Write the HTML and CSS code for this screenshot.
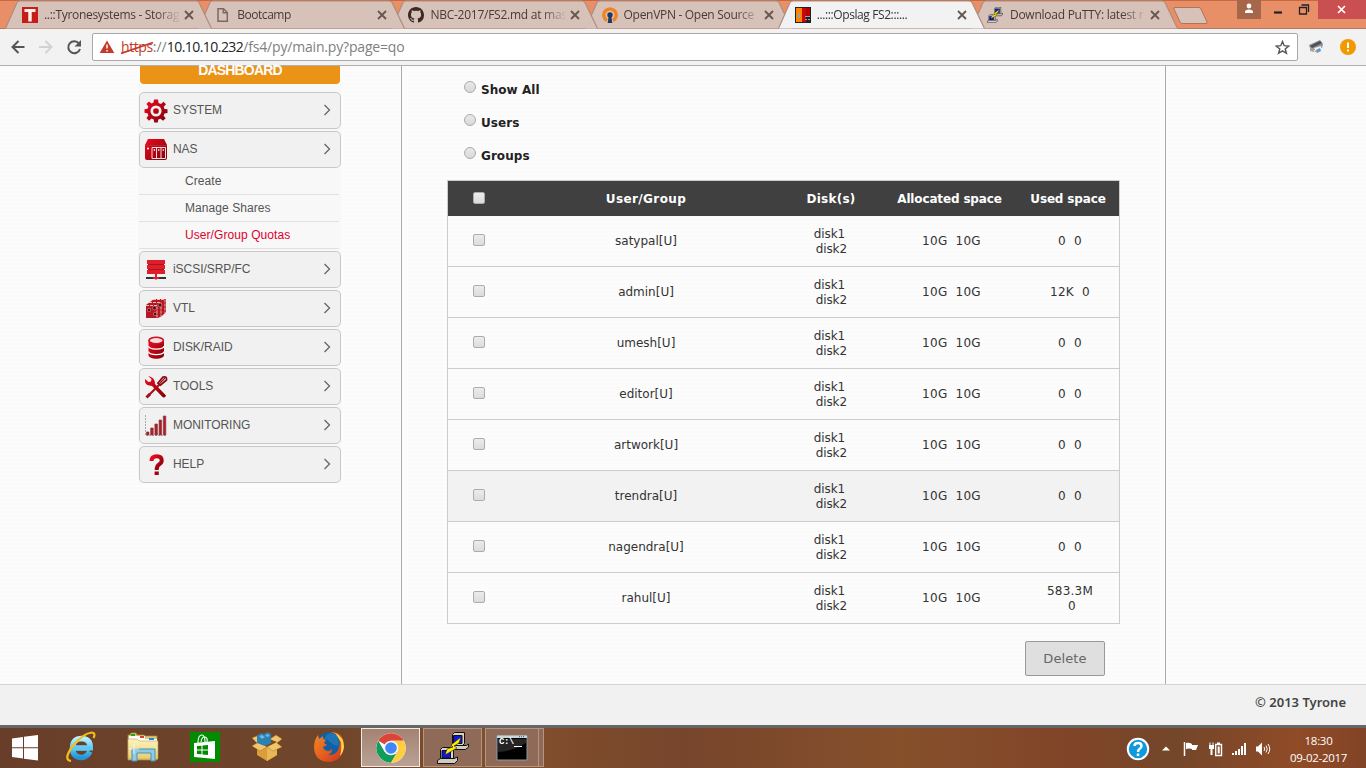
FILE: index.html
```html
<!DOCTYPE html>
<html lang="en">
<head>
<meta charset="utf-8">
<title>...:::Opslag FS2:::...</title>
<link rel="stylesheet" href="styles.css">
</head>
<body>
<svg class="defs" width="0" height="0" aria-hidden="true">
  <defs>
    <linearGradient id="red" x1="0" y1="0" x2="1" y2="1"><stop offset="0" stop-color="#ee0a20"/><stop offset="1" stop-color="#800008"/></linearGradient>
    <linearGradient id="paper" x1="0" y1="0" x2="0" y2="1"><stop offset="0" stop-color="#fff4bd"/><stop offset="1" stop-color="#e8cd71"/></linearGradient>
    <linearGradient id="ie" x1="0" y1="0" x2="0" y2="1"><stop offset="0" stop-color="#b5efff"/><stop offset=".5" stop-color="#5ccaf5"/><stop offset="1" stop-color="#2495d8"/></linearGradient>
    <linearGradient id="fox" x1="0" y1="0" x2="1" y2="1"><stop offset="0" stop-color="#ef8b28"/><stop offset=".5" stop-color="#e8601f"/><stop offset="1" stop-color="#c63220"/></linearGradient>
    <symbol id="tabshape" viewBox="0 0 208 29"><path d="M0.500 28.500L12 2.500Q13 1 15 1H191Q193 1 194 2.500L206.500 28.500"/></symbol>
    <symbol id="x" viewBox="0 0 10 10"><path d="M1 1L9 9M9 1L1 9" stroke="#66564f" stroke-width="1.800"/></symbol>
    <symbol id="chev" viewBox="0 0 8 12"><path d="M1.500 1L6.500 6L1.500 11" fill="none" stroke="#666" stroke-width="1.300"/></symbol>
    <symbol id="putty" viewBox="0 0 32 32">
      <g stroke="#111" stroke-width="1"><path d="M15.500 2.500L17.500.500H27.500V11.500L25.500 13.500H15.500Z" fill="#d9d5c5"/><path d="M16.500 3.500H25V11.500H16.500Z" fill="#1018d8"/><path d="M13.500 16.500L17 13.500H29.500L31.500 12V15L28.500 17.500H13.500Z" fill="#d0ccbd"/>
      <path d="M3.500 17.500L5.500 15.500H16.500V26.500L14.500 28.500H3.500Z" fill="#d9d5c5"/><path d="M5 18.500H13.500V26H5Z" fill="#1018d8"/><path d="M.500 28.500L3.500 26.500H17L20.500 25V28.500L17.500 31.500H.500Z" fill="#d0ccbd"/></g>
      <path d="M24 5L14 13L16 15L10 17L8 23L20 16L17 14L22 11Z" fill="#fff000" stroke="#222" stroke-width=".6"/>
    </symbol>
  </defs>
</svg>
<div class="screen">
  <header class="tabstrip">
    <div class="tab"><svg class="shape"><use href="#tabshape"/></svg>
      <svg class="fav" viewBox="0 0 16 16"><path fill="#c41e17" d="M0 0H16V16H0Z"/><path fill="#fff0eb" d="M2.500 2H13.500V5H9.700V14.500H6.300V5H2.500Z"/></svg>
      <span class="title t1">..::Tyronesystems - Storag</span><svg class="close"><use href="#x"/></svg></div>
    <div class="tab"><svg class="shape"><use href="#tabshape"/></svg>
      <svg class="fav" viewBox="0 0 16 16"><path fill="none" stroke="#7a6a63" stroke-width="1.500" d="M3 1.700H8.500L12.300 5.500V14.300H3ZM8.300 1.700V5.700H12.300"/></svg>
      <span class="title t2">Bootcamp</span><svg class="close"><use href="#x"/></svg></div>
    <div class="tab"><svg class="shape"><use href="#tabshape"/></svg>
      <svg class="fav" viewBox="0 0 16 16"><path fill="#3a2a25" d="M8 0C3.580 0 0 3.580 0 8c0 3.540 2.290 6.530 5.470 7.590.4.070.55-.17.55-.38 0-.19-.01-.82-.01-1.490-2.010.37-2.530-.49-2.690-.94-.09-.23-.48-.94-.82-1.130-.28-.15-.68-.52-.01-.53.63-.01 1.080.58 1.230.82.72 1.210 1.870.87 2.330.66.07-.52.28-.87.51-1.070-1.780-.2-3.640-.89-3.640-3.950 0-.87.31-1.590.82-2.150-.08-.2-.36-1.020.08-2.120 0 0 .67-.21 2.200.82.64-.18 1.320-.27 2-.27s1.360.09 2 .27c1.530-1.040 2.200-.82 2.200-.82.44 1.100.16 1.920.08 2.120.51.56.82 1.270.82 2.150 0 3.070-1.870 3.750-3.650 3.950.29.25.54.73.54 1.480 0 1.070-.01 1.930-.01 2.200 0 .21.15.46.55.38A8.010 8.010 0 0 0 16 8c0-4.420-3.580-8-8-8z"/></svg>
      <span class="title t3">NBC-2017/FS2.md at mas</span><svg class="close"><use href="#x"/></svg></div>
    <div class="tab"><svg class="shape"><use href="#tabshape"/></svg>
      <svg class="fav" viewBox="0 0 16 16"><path fill="none" stroke="#f58220" stroke-width="3.400" d="M5 13.500A6.200 6.200 0 1 1 11 13.500"/><circle cx="8" cy="8" r="2.700" fill="#213a62"/><path fill="#213a62" d="M6.700 9H9.300L10.300 16H5.700Z"/></svg>
      <span class="title t4">OpenVPN - Open Source</span><svg class="close"><use href="#x"/></svg></div>
    <div class="tab active"><svg class="shape"><use href="#tabshape"/></svg>
      <svg class="fav" viewBox="0 0 16 16"><path fill="#242021" d="M0 0H16V16H0Z"/><path fill="#ff8500" d="M1 1H7V15H1Z"/><path fill="#c60808" d="M7 1H11V15H7Z"/><path fill="#b40000" d="M11 1H15V9H11Z"/><path fill="#9aa0a5" d="M3 6H5V11H3ZM10 9H15V10H10ZM10 12H12V13H10ZM13 12H15V13H13Z"/></svg>
      <span class="title t5">...:::Opslag FS2:::...</span><svg class="close"><use href="#x"/></svg></div>
    <div class="tab"><svg class="shape"><use href="#tabshape"/></svg>
      <svg class="fav"><use href="#putty"/></svg>
      <span class="title t6">Download PuTTY: latest r</span><svg class="close"><use href="#x"/></svg></div>
    <svg class="newtab" viewBox="0 0 36 20"><path d="M2 1.500H26Q27 1.500 28 3L34 16Q34.500 17.500 33 17.500H9Q8 17.500 7 16L1 3Q.5 1.500 2 1.500Z" fill="#d6c2b9" stroke="#b07459"/></svg>
    <div class="winctl">
      <span class="user"><svg width="10" height="12" viewBox="0 0 10 12"><circle cx="5" cy="3" r="2.400" fill="#fff"/><path d="M1 10V9Q1 6.500 5 6.500T9 9V10Z" fill="#fff"/></svg></span>
      <svg width="57" height="19" viewBox="0 0 57 19"><path d="M13 12.500H21" stroke="#222" stroke-width="2.200"/><path d="M38.500 7.500H45.500V14H38.500ZM40.500 5H47.500V12" fill="none" stroke="#222" stroke-width="1.300"/></svg>
      <span class="xbtn"><svg width="9" height="9" viewBox="0 0 9 9"><path d="M1 1L8 8M8 1L1 8" stroke="#fff" stroke-width="1.700"/></svg></span>
    </div>
  </header>
  <div class="toolbar">
    <svg class="nav" width="80" height="20" viewBox="0 0 80 20"><path d="M14.500 10H2.500M8.500 4L2.500 10L8.500 16" fill="none" stroke="#555" stroke-width="2"/><path d="M29 10H41.500M35.500 4L41.500 10L35.500 16" fill="none" stroke="#d2d2d2" stroke-width="2"/><path d="M69 6.500A6 6 0 1 0 70 12" fill="none" stroke="#555" stroke-width="2"/><path d="M71 3V9.500H64.500Z" fill="#555"/></svg>
    <div class="omni">
      <svg class="warn" width="16" height="14" viewBox="0 0 16 14"><path d="M8 0.500L15.300 13H.7Z" fill="#c53929"/><path d="M8 4.500V8.500M8 10V11.500" stroke="#fff" stroke-width="1.500"/></svg>
      <span class="scheme">https<svg viewBox="0 0 34 14"><path d="M0 12.500L32 1.500" stroke="#c53929" stroke-width="1.800"/></svg></span><span class="sep">://</span><span class="host">10.10.10.232</span><span class="path">/fs4/py/main.py?page=qo</span>
      <svg class="star" width="15" height="15" viewBox="0 0 15 15"><path d="M7.500 1.500L9.200 5.700L13.800 6L10.200 8.900L11.400 13.300L7.500 10.800L3.600 13.300L4.800 8.900L1.200 6L5.800 5.700Z" fill="none" stroke="#555" stroke-width="1.400"/></svg>
    </div>
    <svg class="ext" width="16" height="16" viewBox="0 0 16 16"><path d="M1 6L12 1L15 5L14 9L3 12Z" fill="#8c8e90"/><path d="M2 7L12 2L14 4L4 9Z" fill="#4c5054"/><path d="M2 8L6 10L6 13L2 12Z" fill="#a2a4a5"/><path d="M6 9L13 7L14 12L9 15Z" fill="#eef2f8"/><path d="M8 11L12 9L13 12L9 14Z" fill="#5797df"/><path d="M6 12L9 11L9 14Z" fill="#f0a325"/></svg>
    <svg class="ext2" width="16" height="16" viewBox="0 0 16 16"><circle cx="8" cy="8" r="8" fill="#f29900"/><path d="M8 3.500V9M8 10.500V12.500" stroke="#fff" stroke-width="2"/></svg>
  </div>
  <main class="page">
    <aside class="side">
      <div class="dash">DASHBOARD</div>
      <nav class="menu">
        <div class="item"><svg class="ic" viewBox="0 0 24 24"><g fill="url(#red)"><path d="M10 .5H14L14.500 4L17 5L19.500 2.700L22 5.200L19.700 7.800L20.500 10L23.500 10.300V14L20.500 14.500L19.600 16.800L21.700 19.300L19 21.700L16.500 19.700L14.300 20.500L13.800 23.500H10.200L9.700 20.500L7.500 19.600L5 21.700L2.400 19L4.400 16.500L3.500 14.300L.5 13.800V10.200L3.500 9.700L4.400 7.500L2.400 5L5 2.500L7.500 4.400L9.500 3.500Z"/></g><circle cx="12" cy="12" r="4.200" fill="none" stroke="#f6f0f0" stroke-width="2.700"/></svg><span>SYSTEM</span><svg class="chev"><use href="#chev"/></svg></div>
        <div class="item"><svg class="ic" viewBox="0 0 24 24"><path d="M4 1H20L23 7V20Q23 22 21 22H3Q1 22 1 20V7Z" fill="url(#red)"/><path d="M1 7.500H23" stroke="#bd3439" stroke-width=".7"/><path d="M8 9.500H21.500V20.500H8ZM12.500 9.500V20.500M17 9.500V20.500" fill="none" stroke="#f3dfe0" stroke-width="1"/><path d="M10.300 11V13M14.800 11V13M19.200 11V13" stroke="#fff"/><circle cx="4" cy="10.500" r="1" fill="#fff"/></svg><span>NAS</span><svg class="chev"><use href="#chev"/></svg></div>
        <div class="sub">Create</div><div class="sub">Manage Shares</div><div class="sub on">User/Group Quotas</div>
        <div class="item after"><svg class="ic" viewBox="0 0 24 24"><path d="M3 2H21V6H3ZM3 7H21V11H3ZM3 12H21V16H3Z" fill="#df1e2a"/><path d="M4 6.500H20M4 11.500H20" stroke="#a8141f"/><path d="M2 20H10M14 20H22" stroke="#333" stroke-width="2"/><path d="M9 20H15M12 16V21.500" stroke="#e01d2d" stroke-width="2"/></svg><span>iSCSI/SRP/FC</span><svg class="chev"><use href="#chev"/></svg></div>
        <div class="item"><svg class="ic" viewBox="0 0 24 24"><path d="M10 2H22V15L18 19L14 21H2V8L6 5Z" fill="#b51822"/><path d="M2 8.500H13V21M5 5.500H17V19M9 2.500H21V16" fill="none" stroke="#f8b6b8" stroke-width="1" stroke-dasharray="3 1"/><g fill="#421316" stroke="#f5888d" stroke-width=".6"><circle cx="5" cy="13" r="1.700"/><circle cx="10.500" cy="11" r="1.900"/><circle cx="16" cy="8" r="1.900"/><circle cx="11" cy="17" r="1.700"/></g></svg><span>VTL</span><svg class="chev"><use href="#chev"/></svg></div>
        <div class="item"><svg class="ic" viewBox="0 0 24 24"><path d="M4.500 4V19C4.500 24 20 24 20 19V4" fill="url(#red)"/><ellipse cx="12.200" cy="4.500" rx="7.200" ry="3.200" fill="#f6dcdd" stroke="#ce1020" stroke-width="1.600"/><path d="M4.500 10.200C5 14 19.500 14 20 10.200M4.500 15.700C5 19.500 19.500 19.500 20 15.700" fill="none" stroke="#fff" stroke-width="1.200"/></svg><span>DISK/RAID</span><svg class="chev"><use href="#chev"/></svg></div>
        <div class="item"><svg class="ic" viewBox="0 0 24 24"><path d="M4 21L18 7" stroke="#a5101b" stroke-width="2.200"/><path d="M14 8L19 2Q23 1 22.500 5L16.500 10Z" fill="#fff" stroke="#8d0813" stroke-width="1.800"/><path d="M16 8L21 3" stroke="#8d0813" stroke-width="1.300"/><path d="M4 1L7.500 4L7 6.500L4.500 7L1 4Q.5 10 5.500 10.500L8 11L18.500 22Q21 23.500 22 20.500L11 9Q11 2 4 1Z" fill="url(#red)"/><path d="M2.500 22.500L6 19" stroke="#a5101b" stroke-width="3"/></svg><span>TOOLS</span><svg class="chev"><use href="#chev"/></svg></div>
        <div class="item"><svg class="ic" viewBox="0 0 24 24"><path d="M1.500 1V21.500H23" fill="none" stroke="#aaa" stroke-dasharray="2 1"/><path d="M2.500 18H5V21H2.500ZM6.700 14H9.200V21H6.700ZM10.900 10H13.400V21H10.900ZM15.100 6H17.600V21H15.100ZM19.300 2H21.800V21H19.300Z" fill="#b91823" stroke="#7c4145" stroke-width=".7"/></svg><span>MONITORING</span><svg class="chev"><use href="#chev"/></svg></div>
        <div class="item"><svg class="ic" viewBox="0 0 24 24"><path d="M7.500 8Q7.500 3.300 12.800 3.300Q17.700 3.300 17.700 7.500Q17.700 10 15 11.500Q12.700 12.800 12.700 17" fill="none" stroke="url(#red)" stroke-width="4"/><path d="M10.600 18.500H14.800V22H10.600Z" fill="#9e0611"/></svg><span>HELP</span><svg class="chev"><use href="#chev"/></svg></div>
      </nav>
    </aside>
    <section class="content">
      <div class="radio"><i></i><b>Show All</b></div>
      <div class="radio"><i></i><b>Users</b></div>
      <div class="radio"><i></i><b>Groups</b></div>
      <div class="table">
        <div class="row head"><div><i></i></div><div class="h1">User/Group</div><div class="h2">Disk(s)</div><div class="h3">Allocated space</div><div class="h4">Used space</div></div>
        <div class="row"><div><i></i></div><div>satypal[U]</div><div class="disks">disk1<br>&nbsp;disk2</div><div class="num alloc">10G&nbsp; 10G</div><div class="num">0&nbsp; 0</div></div>
        <div class="row"><div><i></i></div><div>admin[U]</div><div class="disks">disk1<br>&nbsp;disk2</div><div class="num alloc">10G&nbsp; 10G</div><div class="num">12K&nbsp; 0</div></div>
        <div class="row"><div><i></i></div><div>umesh[U]</div><div class="disks">disk1<br>&nbsp;disk2</div><div class="num alloc">10G&nbsp; 10G</div><div class="num">0&nbsp; 0</div></div>
        <div class="row"><div><i></i></div><div>editor[U]</div><div class="disks">disk1<br>&nbsp;disk2</div><div class="num alloc">10G&nbsp; 10G</div><div class="num">0&nbsp; 0</div></div>
        <div class="row"><div><i></i></div><div>artwork[U]</div><div class="disks">disk1<br>&nbsp;disk2</div><div class="num alloc">10G&nbsp; 10G</div><div class="num">0&nbsp; 0</div></div>
        <div class="row hover"><div><i></i></div><div>trendra[U]</div><div class="disks">disk1<br>&nbsp;disk2</div><div class="num alloc">10G&nbsp; 10G</div><div class="num">0&nbsp; 0</div></div>
        <div class="row"><div><i></i></div><div>nagendra[U]</div><div class="disks">disk1<br>&nbsp;disk2</div><div class="num alloc">10G&nbsp; 10G</div><div class="num">0&nbsp; 0</div></div>
        <div class="row"><div><i></i></div><div>rahul[U]</div><div class="disks">disk1<br>&nbsp;disk2</div><div class="num alloc">10G&nbsp; 10G</div><div class="num two">583.3M<br>&nbsp;0</div></div>
      </div>
      <button class="delete">Delete</button>
    </section>
  </main>
  <footer class="foot"><span>© 2013 Tyrone</span></footer>
  <div class="taskbar">
    <div class="start"><svg width="28" height="28" viewBox="0 0 28 28"><path fill="#fff" d="M1 4.500L12 3V13.300H1ZM13 2.800L27 1V13.300H13ZM1 14.300H12V24.600L1 23ZM13 14.300H27V26.500L13 24.700Z"/></svg></div>
    <div class="app"><svg viewBox="0 0 32 32"><path d="M8.500 17H24.500M24.800 20.500Q22 26.500 16.500 26.500Q7.500 26 7.500 17Q8 7.500 16.500 7.500Q25.500 8 25.300 17" fill="none" stroke="url(#ie)" stroke-width="5.500"/><path d="M8 15.500H28V19.500H8Z" fill="#5ccaf5"/><path d="M6 30Q-2 29 7 16Q18 2 27 1.500Q31 2 28.500 7" fill="none" stroke="#f6bd17" stroke-width="2.200"/></svg></div>
    <div class="app"><svg viewBox="0 0 32 32"><path d="M1 4H3L4 2H9L10 4H17L18 5H30V29H1Z" fill="#e3c66c" stroke="#a98d42" stroke-width=".7"/><path d="M2 5H18V8H30V11H2Z" fill="#fff"/><path d="M4 3H8V5H4Z" fill="#1ba530"/><path d="M13 5H17V7H13Z" fill="#d74222"/><path d="M22 7H27V9H22Z" fill="#1d8bdb"/><path d="M1 8H10L12 10H31V28H1Z" fill="url(#paper)" stroke="#bca057" stroke-width=".6"/><path d="M5 18H28V30H24V22H10V30H5Z" fill="#8dcbe7" stroke="#4b92b4"/><path d="M7 13V23M2 18H12" stroke="#fff" stroke-width=".8"/></svg></div>
    <div class="app"><svg viewBox="0 0 32 32"><path fill="#008b00" d="M1 1H31V31H1Z"/><path d="M9 12Q9 4 13 4Q16 4 16 11M12 11Q13 5 16 6Q19 7 18 11" fill="none" stroke="#e9ffe9" stroke-width="1.200"/><path d="M5 12L26 10V28L5 26Z" fill="#fff"/><path fill="#008b00" d="M8 15L12.500 14.700V18.500H8ZM13.500 14.500L19 14V18.500H13.500ZM8 19.500H12.500V23.300L8 23ZM13.500 19.500H19V24L13.500 23.400Z"/></svg></div>
    <div class="app"><svg viewBox="0 0 32 32"><path d="M6 12L16 16L26 12V24L16 30L6 24Z" fill="#d99d39"/><path d="M16 16L26 12V24L16 30Z" fill="#e8b754"/><path d="M1 7L8 4L16 10L25 4L31 8L26 12L31 16L22 20L16 16L9 20L1 15L6 12Z" fill="#f2c56b" stroke="#a57328" stroke-width=".5"/><path d="M6 11L16 7L26 11L16 16Z" fill="#725020"/><path d="M6 5L10 2L13 3L17 1L20 3V12L14 15L6 12Z" fill="#2b81b4"/><path d="M8 5L11 4L14 6L11 8ZM14 4L17 3L19 5L16 6Z" fill="#67b9df"/></svg></div>
    <div class="app"><svg viewBox="0 0 32 32"><circle cx="17" cy="15" r="14" fill="#135fa3"/><path d="M18 1Q30 1 31 13Q31 29 17 31Q2 31 1 17Q1 9 5 4L6 8L10 5Q9 8 13 9L11 12L14 14L10 16Q11 20 16 20L19 18Q19 23 15 24Q24 25 26 16Q28 9 24 4Z" fill="url(#fox)"/><path d="M22 2Q31 6 31 16Q30 22 27 25Q29 17 28 11L26 8Z" fill="#ffd843"/><path d="M13 5Q15 1 22 3Q27 8 25 15Q20 14 17 11Q15 8 11 8Z" fill="#2074b4"/></svg></div>
    <div class="app win active"><svg viewBox="0 0 32 32"><circle cx="16" cy="16" r="14.700" fill="#fff"/><path d="M16 16L3.270 8.650A14.700 14.700 0 0 1 28.730 8.650H16Z" fill="#db4437"/><path d="M3.270 8.650A14.700 14.700 0 0 0 16 30.700L22.360 19.700L9.600 19.700Z" fill="#0f9d58"/><path d="M28.730 8.650A14.700 14.700 0 0 1 16 30.700L22.400 19.700L16 8.650Z" fill="#ffcd40"/><circle cx="16" cy="16" r="7.300" fill="#f5f5f5"/><circle cx="16" cy="16" r="5.800" fill="#4285f4"/></svg></div>
    <div class="app win"><svg><use href="#putty"/></svg></div>
    <div class="app win stack"><svg viewBox="0 0 32 32"><path d="M1 4H31V28H1Z" fill="#000" stroke="#8f989c"/><path d="M1 3.500H31V6H1Z" fill="#c8d6de"/><path d="M23 4.700H29" stroke="#456" stroke-dasharray="1 1"/><path d="M2 20Q16 20 30 11V7H2Z" fill="#252525"/><path d="M18 14.500H26" stroke="#fff"/></svg><span class="cmd">C:\</span></div>
    <div class="tail"></div>
    <div class="tray">
      <svg width="24" height="24" viewBox="0 0 24 24"><circle cx="12" cy="12" r="10.200" fill="#109ade" stroke="#fff" stroke-width="2"/><path d="M8.500 9Q8.500 6 12 6T15.500 9Q15.500 11 13.500 12Q12 13 12 15M12 16.500V19" fill="none" stroke="#fff" stroke-width="2.500"/></svg>
      <svg class="up" width="8" height="5" viewBox="0 0 8 5"><path d="M0 4.500L4 .5L8 4.500Z" fill="#fff"/></svg>
      <svg class="flag" width="16" height="16" viewBox="0 0 16 16"><path d="M1.500 1V15" stroke="#fff" stroke-width="1.500"/><path d="M3 2Q6 1 9 3V4H15L13 9H9V8Q6 7 3 8Z" fill="#fff"/></svg>
      <svg class="bat" width="15" height="16" viewBox="0 0 15 16"><path d="M7.700 3.500H13.500V14.500H7.700Z" fill="none" stroke="#fff" stroke-width="1.400"/><path d="M9 1.500H12V3H9ZM9.700 5.500H11.700V12.500H9.700ZM1 4H6V8H4.500V14H2.500V8H1ZM1.500 1.500H2.500V4H1.500ZM4.500 1.500H5.500V4H4.500Z" fill="#fff"/></svg>
      <svg class="sig" width="16" height="14" viewBox="0 0 16 14"><path fill="#fff" d="M1 11H3V13H1ZM4 9H6V13H4ZM7 7H9V13H7ZM10 4H12V13H10ZM13 1H15V13H13Z"/></svg>
      <svg class="vol" width="16" height="16" viewBox="0 0 16 16"><path d="M1 5.500H3L7 1.500V14.500L3 10.500H1Z" fill="#fff"/><path d="M9 6Q10.500 8 9 10M11 4.500Q13.500 8 11 11.500M13 3Q16.500 8 13 13" fill="none" stroke="#fff" stroke-width="1"/></svg>
      <div class="clock"><span>18:30</span><span class="date">09-02-2017</span></div>
    </div>
  </div>
</div>
</body>
</html>
```

FILE: styles.css
```css
* { box-sizing: border-box; }
body { margin: 0; overflow: hidden; font-family: "DejaVu Sans", sans-serif; }
svg { display: block; flex: none; }
.defs { position: absolute; }
.screen { width: 1366px; height: 768px; display: flex; flex-direction: column; overflow: hidden; }

/* browser frame */
.tabstrip { height: 29px; flex: none; background: #e98f67; border-top: 1px solid #c46a45; border-bottom: 1px solid #b17b63; display: flex; padding-left: 5px; }
.tab { position: relative; width: 193.200px; height: 28px; flex: none; display: flex; align-items: center; padding-left: 17px; font: 12px "Open Sans", sans-serif; color: #493a34; isolation: isolate; z-index: 1; }
.tab:nth-child(1) { z-index: 5; }
.tab:nth-child(2) { z-index: 4; }
.tab:nth-child(3) { z-index: 3; }
.tab:nth-child(4) { z-index: 2; }
.shape { position: absolute; left: 0; top: -1px; width: 208px; height: 29px; z-index: -1; fill: #d6c2b9; stroke: #b18c7b; stroke-width: 1.200; }
.tab.active { color: #333; z-index: 6; }
.active .shape { fill: #f2f2f2; }
.tab:nth-child(6) .fav { margin-left: -1px; margin-right: 7px; }
.fav { width: 16px; height: 16px; margin-right: 6px; }
.title { width: 139px; flex: none; white-space: nowrap; height: 18px; line-height: 18px; -webkit-mask-image: linear-gradient(90deg, #000 112px, transparent 137px); mask-image: linear-gradient(90deg, #000 112px, transparent 137px); }
.t1 { letter-spacing: -.3px; }
.t2 { letter-spacing: -.45px; }
.t3 { letter-spacing: -.25px; }
.t4 { letter-spacing: -.3px; }
.t5 { letter-spacing: -.4px; }
.t6 { letter-spacing: -.25px; }
.close { width: 10px; height: 10px; margin-left: 1px; }
.newtab { width: 36px; height: 20px; margin: 5px 0 0 9px; }
.winctl { display: flex; margin-left: auto; height: 19px; margin-top: -1px; }
.user { width: 24px; background: #a56649; display: flex; justify-content: center; padding-top: 3px; }
.xbtn { width: 48px; padding-right: 2px; background: #c94f50; display: flex; justify-content: center; align-items: center; }
.toolbar { height: 37px; flex: none; background: #f2f2f2; border-bottom: 1px solid #b0aeae; display: flex; align-items: flex-start; padding: 4px 10px 0; }
.nav { margin: 4px 2px 0 0; }
.omni { height: 28px; width: 1206px; background: #fff; border: 1px solid #a9a9a9; border-radius: 2px; display: flex; align-items: center; padding: 0 7px 0 6px; font: 14px/20px "Open Sans", sans-serif; white-space: nowrap; }
.warn { margin-right: 6px; }
.scheme { position: relative; color: #c53929; letter-spacing: -.4px; }
.scheme svg { position: absolute; left: 0; top: 4px; width: 34px; height: 14px; }
.sep, .path { color: #808080; }
.host { color: #222; letter-spacing: -.55px; }
.path { letter-spacing: -.18px; }
.star { margin-left: auto; }
.ext { margin: 6px 0 0 10px; }
.ext2 { margin: 6px 0 0 16px; }

/* page */
.page { height: 618px; flex: none; display: flex; padding-left: 138px; background-color: #fcfcfc; background-image: radial-gradient(#fafafa 1px, transparent 1.200px); background-size: 4px 4px; }
.side { width: 263px; font-family: "Liberation Sans", sans-serif; }
.dash { width: 200px; height: 18px; margin-left: 2px; background: #eb9316; color: #fff; border-radius: 0 0 4px 4px; font-weight: bold; font-size: 14px; line-height: 9px; text-align: center; letter-spacing: -.85px; }
.menu { width: 203px; padding: 8px 0 0 1px; background: #f8f8f8; }
.item { width: 202px; height: 37px; margin-bottom: 2px; border: 1px solid #c8c8c8; border-radius: 5px; background: #f1f1f1; display: flex; align-items: center; padding: 0 9px 0 4px; font-size: 12px; color: #555; }
.item span { flex: 1; padding-bottom: 2px; letter-spacing: -.05px; }
.ic { width: 24px; height: 24px; margin-right: 5px; }
.chev { width: 8px; height: 12px; margin-bottom: 2px; }
.sub { height: 27px; line-height: 26px; border-bottom: 1px solid #e1e1e1; padding-left: 46px; font-size: 12px; color: #555; margin-right: 2px; letter-spacing: .07px; }
.item + .sub { margin-top: -2px; }
.sub.on { color: #e0002d; }
.item.after { margin-top: 2px; }
.content { width: 765px; border: solid #aaa; border-width: 0 1px; padding: 11px 45px 0; }
.radio { height: 33px; display: flex; align-items: flex-start; padding-left: 17px; font-size: 13px; color: #222; }
.radio i { width: 12px; height: 12px; margin: 4px 5px 0 0; border: 1px solid #aaa; border-radius: 50%; background: linear-gradient(#e9e9e9, #d9d9d9); }
.radio b { font-size: 12px; line-height: 27px; letter-spacing: .05px; }
.table { width: 673px; margin-top: 4px; border: 1px solid #ccc; border-bottom: 0; font-size: 12px; color: #333; line-height: 15px; }
.row { height: 51px; display: grid; grid-template-columns: 62px 272px 98px 139px 100px; align-items: center; text-align: center; border-bottom: 1px solid #ccc; }
.row.head { height: 35px; background: #404040; color: #fff; font-weight: bold; border: 0; }
.row.hover { background: #f2f2f2; }
.row i { display: block; width: 12px; height: 12px; margin: -3px auto 0; border: 1px solid #acacac; border-radius: 2px; background: linear-gradient(#ececec, #dcdcdc); }
.head i { margin-top: -1px; }
.h1, .h2, .h3, .h4 { padding-top: 2px; }
.h1 { letter-spacing: .4px; }
.h2 { letter-spacing: .25px; }
.h3, .h4 { letter-spacing: -.15px; }
.h4 { padding-right: 2px; }
.disks { padding: 2px 3px 0 0; letter-spacing: -.1px; }
.num { letter-spacing: .25px; padding-left: 2px; }
.alloc { padding-left: 4px; }
.num.two { padding-top: 1px; }
.delete { display: block; width: 80px; height: 35px; margin: 17px 15px 0 auto; background: #dfdfdf; border: 1px solid #999; border-radius: 2px; color: #666; font: 13px "DejaVu Sans", sans-serif; letter-spacing: .1px; }
.foot { height: 41px; flex: none; background: #f1f1f1; border-top: 1px solid #d5d5d5; display: flex; justify-content: flex-end; padding: 7px 20px 0; font: 600 13px/20px "Noto Sans", sans-serif; color: #444; }

/* taskbar */
.taskbar { height: 43px; flex: none; border-top: 3px solid #666; background: linear-gradient(90deg, #683e2a 0, #70462b 25%, #82502b 37%, #77452c 50%, #86502b 66%, #814528 78%, #73462a 86%, #904b27 95%, #814326 100%); display: flex; }
.start { width: 50px; padding: 6px 0 0 11px; }
.app { width: 62px; flex: none; display: flex; justify-content: center; padding-top: 3px; }
.app svg { width: 32px; height: 32px; }
.win { width: 59px; height: 39px; margin-right: 3px; border: 1px solid #b69483; background: #8f6a59; }
.win.active { margin-left: 1px; background: linear-gradient(#a48272, #b8a295); border-color: #f3eae5; }
.stack { position: relative; margin-right: 0; width: 54px; }
.tail { width: 5px; height: 39px; border: 1px solid #b69483; border-left: 0; background: #8f6a59; }
.cmd { position: absolute; left: 13px; top: 8px; font: bold 9px "Liberation Mono", monospace; color: #fff; letter-spacing: -.5px; }
.tray { margin-left: auto; display: flex; align-items: center; color: #fff; padding: 1px 18px 0 0; }
.up { margin-left: 12px; }
.flag { margin-left: 13px; }
.bat { margin-left: 9px; }
.sig { margin-left: 8px; }
.vol { margin-left: 8px; }
.clock { display: flex; flex-direction: column; align-items: center; margin-left: 18px; width: 59px; font: 11.500px/17px "Open Sans", sans-serif; white-space: nowrap; letter-spacing: -.3px; }
```
